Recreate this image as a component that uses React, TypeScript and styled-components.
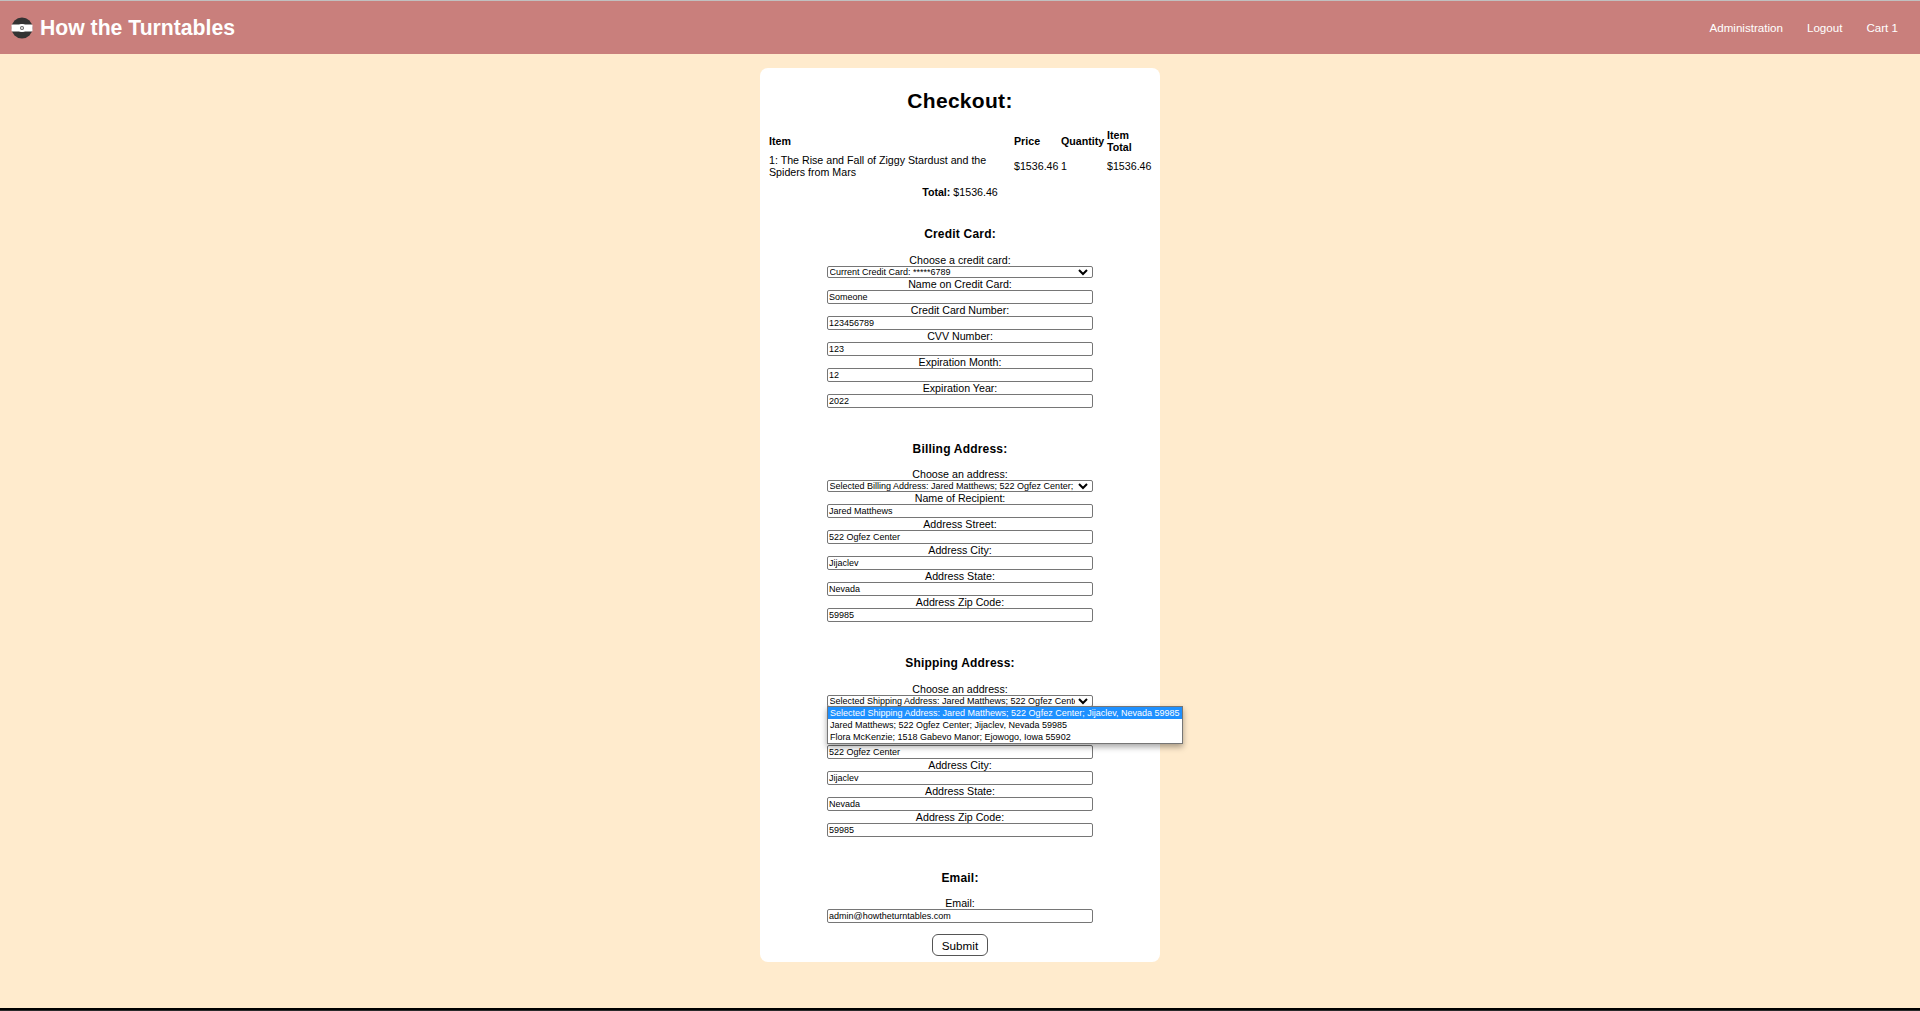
import React from 'react'
import styled, { createGlobalStyle } from 'styled-components'

const GlobalStyle = createGlobalStyle`
  html, body {
    margin: 0;
    padding: 0;
    background: #ffebcd;
  }
  body {
    font-family: "Liberation Sans", Arial, sans-serif;
    font-size: 10.67px;
    color: #000;
  }
`

const Page = styled.div`
  display: flex;
  flex-direction: column;
  height: 1011px;
  overflow: hidden;
`

const NavBar = styled.nav`
  display: flex;
  align-items: center;
  justify-content: space-between;
  height: 53px;
  flex: none;
  border-top: 1px solid #c0c0c0;
  background: #c97f7c;
  padding: 0 22px 0 11px;
  color: #fff;
`

const Brand = styled.div`
  display: flex;
  align-items: center;
  gap: 7px;
  font-size: 21.2px;
  font-weight: 700;
`

const NavLinks = styled.div`
  display: flex;
  gap: 24px;
`

const NavLink = styled.a`
  font-size: 11.6px;
  color: #fff;
`

const Main = styled.main`
  flex: 1;
  display: flex;
  justify-content: center;
  align-items: flex-start;
  padding-top: 14px;
`

const Card = styled.div`
  width: 400px;
  height: 894px;
  box-sizing: border-box;
  background: #fff;
  border-radius: 8px;
  padding: 21px 8px 0;
  display: flex;
  flex-direction: column;
  align-items: center;
`

const Title = styled.h1`
  margin: 0 0 15px;
  font-size: 21px;
  line-height: 24px;
  letter-spacing: 0.3px;
  font-weight: 700;
`

const ItemTable = styled.table`
  width: 384px;
  border-spacing: 0 1px;
  border-collapse: separate;
  table-layout: fixed;
  font-size: 10.67px;
  line-height: 12px;
  text-align: left;
  th, td {
    padding: 0 1px;
  }
`

const TotalRow = styled.div`
  margin-top: 6px;
  font-size: 10.67px;
  line-height: 14px;
`

const Section = styled.section<{ $gap: number }>`
  width: 266px;
  margin-top: ${(p) => p.$gap}px;
  display: flex;
  flex-direction: column;
  align-items: stretch;
  text-align: center;
`

const SectionTitle = styled.h3`
  margin: 0 0 12.5px;
  font-size: 12px;
  line-height: 14px;
  letter-spacing: 0.2px;
  font-weight: 700;
  white-space: nowrap;
`

const Label = styled.label`
  display: block;
  font-size: 10.67px;
  line-height: 12px;
  height: 12px;
`

const FieldBox = styled.div`
  box-sizing: border-box;
  border: 1px solid #767676;
  border-radius: 2px;
  font-size: 9px;
  padding-left: 1px;
  text-align: left;
  background: #fff;
  white-space: nowrap;
  overflow: hidden;
`

const InputBox = styled(FieldBox)`
  height: 14px;
  line-height: 12px;
`

const SelectBox = styled(FieldBox)`
  position: relative;
  height: 12px;
  line-height: 10px;
  padding-left: 1.5px;
  padding-right: 17px;
  svg {
    position: absolute;
    right: 4px;
    top: 1px;
  }
`

const SelectValue = styled.span`
  display: block;
  overflow: hidden;
`

const SelectWrap = styled.div`
  position: relative;
`

const Dropdown = styled.div`
  position: absolute;
  left: 0;
  top: 11px;
  width: 356px;
  box-sizing: border-box;
  border: 1px solid #767676;
  background: #fff;
  box-shadow: 0 3px 6px rgba(0, 0, 0, 0.35);
  text-align: left;
  font-size: 9px;
  line-height: 12px;
  z-index: 2;
`

const Option = styled.div<{ $selected?: boolean }>`
  height: 12px;
  padding-left: 2px;
  white-space: nowrap;
  background: ${(p) => (p.$selected ? '#1e90ff' : '#fff')};
  color: ${(p) => (p.$selected ? '#fff' : '#000')};
`

const SubmitButton = styled.button`
  margin-top: 11px;
  width: 56px;
  height: 21.5px;
  padding: 0;
  border: 1px solid #555;
  border-radius: 6px;
  background: #fff;
  font-family: inherit;
  font-size: 11.7px;
  color: #000;
`

const Footer = styled.footer`
  height: 3px;
  box-sizing: border-box;
  flex: none;
  background: #000;
  border-bottom: 1px solid #2a2a2a;
`

function Logo() {
  return (
    <svg width="22" height="22" viewBox="0 0 22 22">
      <circle cx="11" cy="11" r="10.5" fill="#333" />
      <rect x="0.5" y="7.5" width="21" height="7" rx="1" fill="#fff" />
      <circle cx="11" cy="11" r="4" fill="#fff" />
      <circle cx="11" cy="11" r="2" fill="#666" />
      <circle cx="11" cy="11" r="0.9" fill="#fff" />
    </svg>
  )
}

function Chevron() {
  return (
    <svg width="10" height="8" viewBox="0 0 10 8">
      <path d="M1 2 L5 6 L9 2" fill="none" stroke="#000" strokeWidth="2" />
    </svg>
  )
}

function InputField({ label, value }: { label: string; value: string }) {
  return (
    <>
      <Label>{label}</Label>
      <InputBox>{value}</InputBox>
    </>
  )
}

function SelectField({ label, value, children }: { label: string; value: string; children?: React.ReactNode }) {
  return (
    <>
      <Label>{label}</Label>
      <SelectWrap>
        <SelectBox>
          <SelectValue>{value}</SelectValue>
          <Chevron />
        </SelectBox>
        {children}
      </SelectWrap>
    </>
  )
}

const addressFields = [
  ['Name of Recipient:', 'Jared Matthews'],
  ['Address Street:', '522 Ogfez Center'],
  ['Address City:', 'Jijaclev'],
  ['Address State:', 'Nevada'],
  ['Address Zip Code:', '59985'],
]

const cardFields = [
  ['Name on Credit Card:', 'Someone'],
  ['Credit Card Number:', '123456789'],
  ['CVV Number:', '123'],
  ['Expiration Month:', '12'],
  ['Expiration Year:', '2022'],
]

export default function App() {
  return (
    <Page>
      <GlobalStyle />
      <NavBar>
        <Brand>
          <Logo />
          How the Turntables
        </Brand>
        <NavLinks>
          <NavLink>Administration</NavLink>
          <NavLink>Logout</NavLink>
          <NavLink>Cart 1</NavLink>
        </NavLinks>
      </NavBar>
      <Main>
        <Card>
          <Title>Checkout:</Title>
          <ItemTable>
            <colgroup>
              <col style={{ width: 245 }} />
              <col style={{ width: 47 }} />
              <col style={{ width: 46 }} />
              <col />
            </colgroup>
            <thead>
              <tr>
                <th>Item</th>
                <th>Price</th>
                <th>Quantity</th>
                <th>Item Total</th>
              </tr>
            </thead>
            <tbody>
              <tr>
                <td>1: The Rise and Fall of Ziggy Stardust and the Spiders from Mars</td>
                <td>$1536.46</td>
                <td>1</td>
                <td>$1536.46</td>
              </tr>
            </tbody>
          </ItemTable>
          <TotalRow>
            <b>Total:</b> $1536.46
          </TotalRow>
          <Section $gap={28}>
            <SectionTitle>Credit Card:</SectionTitle>
            <SelectField label="Choose a credit card:" value="Current Credit Card: *****6789" />
            {cardFields.map(([label, value]) => (
              <InputField key={label} label={label} value={value} />
            ))}
          </Section>
          <Section $gap={34.17}>
            <SectionTitle>Billing Address:</SectionTitle>
            <SelectField label="Choose an address:" value="Selected Billing Address: Jared Matthews; 522 Ogfez Center; Jijaclev, Nevada 59985" />
            {addressFields.map(([label, value]) => (
              <InputField key={label} label={label} value={value} />
            ))}
          </Section>
          <Section $gap={34.17}>
            <SectionTitle>Shipping Address:</SectionTitle>
            <SelectField label="Choose an address:" value="Selected Shipping Address: Jared Matthews; 522 Ogfez Center; Jijaclev, Nevada 59985">
              <Dropdown>
                <Option $selected>Selected Shipping Address: Jared Matthews; 522 Ogfez Center; Jijaclev, Nevada 59985</Option>
                <Option>Jared Matthews; 522 Ogfez Center; Jijaclev, Nevada 59985</Option>
                <Option>Flora McKenzie; 1518 Gabevo Manor; Ejowogo, Iowa 55902</Option>
              </Dropdown>
            </SelectField>
            {addressFields.map(([label, value]) => (
              <InputField key={label} label={label} value={value} />
            ))}
          </Section>
          <Section $gap={34.17}>
            <SectionTitle>Email:</SectionTitle>
            <InputField label="Email:" value="admin@howtheturntables.com" />
          </Section>
          <SubmitButton>Submit</SubmitButton>
        </Card>
      </Main>
      <Footer />
    </Page>
  )
}
